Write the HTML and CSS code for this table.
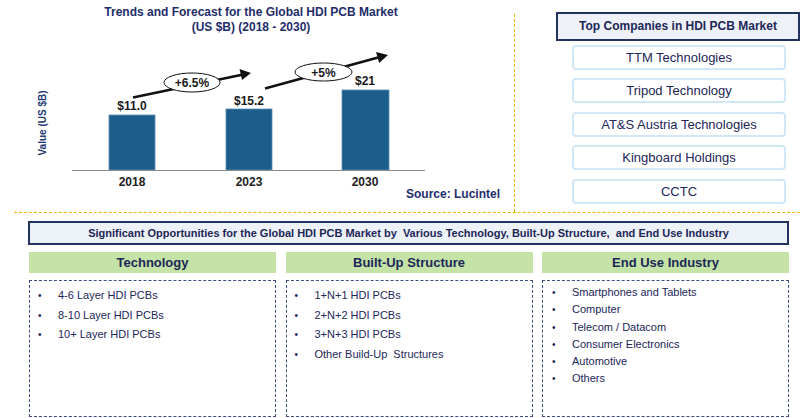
FILE: index.html
```html
<!DOCTYPE html>
<html>
<head>
<meta charset="utf-8">
<link rel="stylesheet" href="styles.css">
</head>
<body>
<div class="page">
  <div class="top">
    <div class="chart">
      <svg width="514" height="212" viewBox="0 0 514 212">
        <text class="ctitle" x="251" y="16">Trends and Forecast for the Global HDI PCB Market</text>
        <text class="ctitle" x="251" y="31">(US $B) (2018 - 2030)</text>
        <text class="yaxis" transform="translate(46,123) rotate(-90)">Value (US $B)</text>
        <rect class="bar" x="109" y="115" width="46" height="55"/>
        <rect class="bar" x="226" y="109" width="46" height="61"/>
        <rect class="bar" x="342" y="90" width="47" height="80"/>
        <line class="axis" x1="72" y1="170.5" x2="425" y2="170.5"/>
        <text class="val" x="132" y="110">$11.0</text>
        <text class="val" x="249" y="105">$15.2</text>
        <text class="val" x="365" y="85">$21</text>
        <text class="year" x="132" y="186">2018</text>
        <text class="year" x="249" y="186">2023</text>
        <text class="year" x="365" y="186">2030</text>
        <text class="source" x="500" y="198">Source: Lucintel</text>
        <line class="arrow" x1="133" y1="97.5" x2="242" y2="74.8"/>
        <polygon class="head" points="251,73 239.5,69 242,80"/>
        <ellipse class="bubble" cx="192" cy="82.5" rx="28" ry="9.5"/>
        <text class="pct" x="192" y="87">+6.5%</text>
        <line class="arrow" x1="265" y1="88.5" x2="379" y2="57.2"/>
        <polygon class="head" points="388,55 376,52 379.2,63"/>
        <ellipse class="bubble" cx="323.5" cy="72" rx="28.5" ry="9"/>
        <text class="pct" x="323.5" y="76.5">+5%</text>
      </svg>
    </div>
    <div class="vdiv"></div>
    <div class="companies">
      <div class="comp-head">Top Companies in HDI PCB Market</div>
      <div class="comp">TTM Technologies</div>
      <div class="comp">Tripod Technology</div>
      <div class="comp">AT&amp;S Austria Technologies</div>
      <div class="comp">Kingboard Holdings</div>
      <div class="comp">CCTC</div>
    </div>
  </div>
  <div class="hdiv"></div>
  <div class="bottom">
    <div class="opp-head">Significant Opportunities for the Global HDI PCB Market by&nbsp; Various Technology, Built-Up Structure,&nbsp; and End Use Industry</div>
    <div class="cols">
      <div class="col">
        <div class="col-head">Technology</div>
        <ul class="list">
          <li>4-6 Layer HDI PCBs</li>
          <li>8-10 Layer HDI PCBs</li>
          <li>10+ Layer HDI PCBs</li>
        </ul>
      </div>
      <div class="col">
        <div class="col-head">Built-Up Structure</div>
        <ul class="list">
          <li>1+N+1 HDI PCBs</li>
          <li>2+N+2 HDI PCBs</li>
          <li>3+N+3 HDI PCBs</li>
          <li>Other Build-Up&nbsp; Structures</li>
        </ul>
      </div>
      <div class="col">
        <div class="col-head">End Use Industry</div>
        <ul class="list tight">
          <li>Smartphones and Tablets</li>
          <li>Computer</li>
          <li>Telecom / Datacom</li>
          <li>Consumer Electronics</li>
          <li>Automotive</li>
          <li>Others</li>
        </ul>
      </div>
    </div>
  </div>
</div>
</body>
</html>
```

FILE: styles.css
```css
* { box-sizing: border-box; }
html, body { margin: 0; padding: 0; background: #fff; }
body {
  width: 800px;
  height: 418px;
  overflow: hidden;
  font-family: "Liberation Sans", Arial, sans-serif;
  color: #1f2a5c;
}
.top {
  display: flex;
  height: 212px;
}
.chart { width: 514px; flex: none; }
.chart svg { display: block; }
.ctitle {
  font: bold 12px "Liberation Sans", Arial, sans-serif;
  fill: #1f2d6b;
  text-anchor: middle;
}
.yaxis {
  font: bold 10px "Liberation Sans", Arial, sans-serif;
  fill: #1f3a70;
  text-anchor: middle;
}
.bar { fill: #1d5d8b; stroke: #5a8db5; stroke-width: 0.8; }
.axis { stroke: #8a8a8a; stroke-width: 1; }
.val, .year, .pct {
  font: bold 12px "Liberation Sans", Arial, sans-serif;
  fill: #1a1a1a;
  text-anchor: middle;
}
.year { fill: #222; }
.source {
  font: bold 12px "Liberation Sans", Arial, sans-serif;
  fill: #1f2d6b;
  text-anchor: end;
}
.arrow { stroke: #111; stroke-width: 2.6; }
.head { fill: #111; }
.bubble { fill: #fff; stroke: #111; stroke-width: 1; }
.vdiv {
  width: 0;
  margin-top: 14px;
  border-left: 1px dashed #f2b400;
}
.companies {
  flex: 1;
  padding-top: 12px;
  display: flex;
  flex-direction: column;
  align-items: flex-end;
}
.comp-head {
  width: 244px;
  height: 29px;
  background: #eef2f8;
  border: 2px solid #23325f;
  font-weight: bold;
  font-size: 12px;
  color: #1c2657;
  display: flex;
  align-items: center;
  justify-content: center;
  margin-bottom: 4px;
}
.comp {
  width: 214px;
  height: 25px;
  margin-right: 14px;
  margin-bottom: 8.5px;
  border: 2px solid #d2e7f5;
  border-radius: 4px;
  font-size: 13px;
  color: #1c2657;
  display: flex;
  align-items: center;
  justify-content: center;
}
.hdiv {
  margin-left: 14px;
  border-top: 1px dashed #f2b400;
}
.bottom {
  padding: 8px 11px 0 28px;
}
.opp-head {
  height: 24px;
  background: #edf2f8;
  border: 2px solid #23325f;
  font-weight: bold;
  font-size: 11px;
  color: #1c2657;
  display: flex;
  align-items: center;
  justify-content: center;
}
.cols {
  display: grid;
  grid-template-columns: repeat(3, 1fr);
  column-gap: 9.5px;
  margin-top: 7px;
  padding-left: 1px;
}
.col-head {
  height: 21px;
  background: #c5e3a6;
  font-weight: bold;
  font-size: 13px;
  color: #1c2657;
  display: flex;
  align-items: center;
  justify-content: center;
}
.list {
  list-style: none;
  margin: 7px 0 0 0;
  height: 137px;
  border: 1.5px dashed #3d4d82;
  padding: 5px 0 0 8px;
}
.list li {
  font-size: 11px;
  line-height: 19.7px;
  color: #1c2657;
  display: flex;
}
.list li::before {
  content: "•";
  width: 20px;
  flex: none;
  font-size: 10px;
}
.list.tight { padding-top: 3px; padding-left: 9px; }
.list.tight li { line-height: 17.3px; }
```
